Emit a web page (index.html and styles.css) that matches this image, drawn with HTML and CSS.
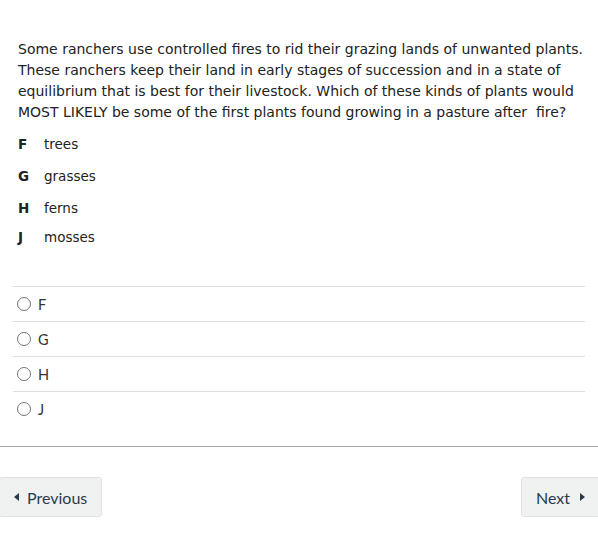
FILE: index.html
```html
<!DOCTYPE html>
<html>
<head>
<meta charset="utf-8">
<link rel="stylesheet" href="styles.css">
</head>
<body>
<div class="page">
  <div class="item">
    <p class="question">Some ranchers use controlled fires to rid their grazing lands of unwanted plants. These ranchers keep their land in early stages of succession and in a state of equilibrium that is best for their livestock. Which of these kinds of plants would MOST LIKELY be some of the first plants found growing in a pasture after&nbsp; fire?</p>
    <div class="options">
      <div class="opt"><span class="opt-key">F</span><span>trees</span></div>
      <div class="opt"><span class="opt-key">G</span><span>grasses</span></div>
      <div class="opt"><span class="opt-key">H</span><span>ferns</span></div>
      <div class="opt opt-last"><span class="opt-key">J</span><span>mosses</span></div>
    </div>
    <div class="choices">
      <label class="choice"><span class="radio"></span><span>F</span></label>
      <label class="choice"><span class="radio"></span><span>G</span></label>
      <label class="choice"><span class="radio"></span><span>H</span></label>
      <label class="choice"><span class="radio"></span><span>J</span></label>
    </div>
  </div>
  <div class="footer">
    <button class="btn"><span class="tri tri-left"></span>Previous</button>
    <button class="btn">Next<span class="tri tri-right"></span></button>
  </div>
</div>
</body>
</html>
```
FILE: styles.css
```css
html, body { margin: 0; padding: 0; background: #fff; }
.page { width: 598px; }
.item { padding: 39px 13px 0 13px; }
.question {
  margin: 0;
  padding: 0 0 0 5px;
  font-family: "DejaVu Sans", Verdana, sans-serif;
  font-size: 14px;
  line-height: 21px;
  color: #222;
}
.options { margin-top: 11px; padding: 0 5px; }
.opt {
  display: flex;
  height: 32px;
  font-family: "DejaVu Sans", Verdana, sans-serif;
  font-size: 13.5px;
  line-height: 21px;
  color: #222;
}
.opt-last { margin-top: -3px; height: 21px; }
.opt-key { width: 26px; font-weight: bold; }
.choices { margin-top: 38px; }
.choice {
  display: flex;
  align-items: center;
  gap: 7px;
  height: 35px;
  padding-left: 4px;
  border-top: 1px solid #dedede;
  box-sizing: border-box;
  font-family: Lato, sans-serif;
  font-size: 14.5px;
  color: #333;
}
.radio {
  width: 12px;
  height: 12px;
  border: 1px solid #777;
  border-radius: 50%;
}
.footer {
  margin: 20px -2px 0 -1px;
  border-top: 1px solid #a9a9a9;
  padding-top: 30px;
  display: flex;
  justify-content: space-between;
}
.btn {
  height: 40px;
  padding: 0 14px;
  background: #f0f2f2;
  border: 1px solid #e0e2e2;
  border-radius: 3px;
  font-family: Lato, sans-serif;
  font-size: 16px;
  color: #2a3b4c;
  display: flex;
  align-items: center;
  gap: 8px;
}
.tri { width: 0; height: 0; border-top: 4px solid transparent; border-bottom: 4px solid transparent; }
.tri-left { border-right: 5px solid #2a3b4c; }
.tri-right { border-left: 5px solid #2a3b4c; margin-left: 2px; }
```
